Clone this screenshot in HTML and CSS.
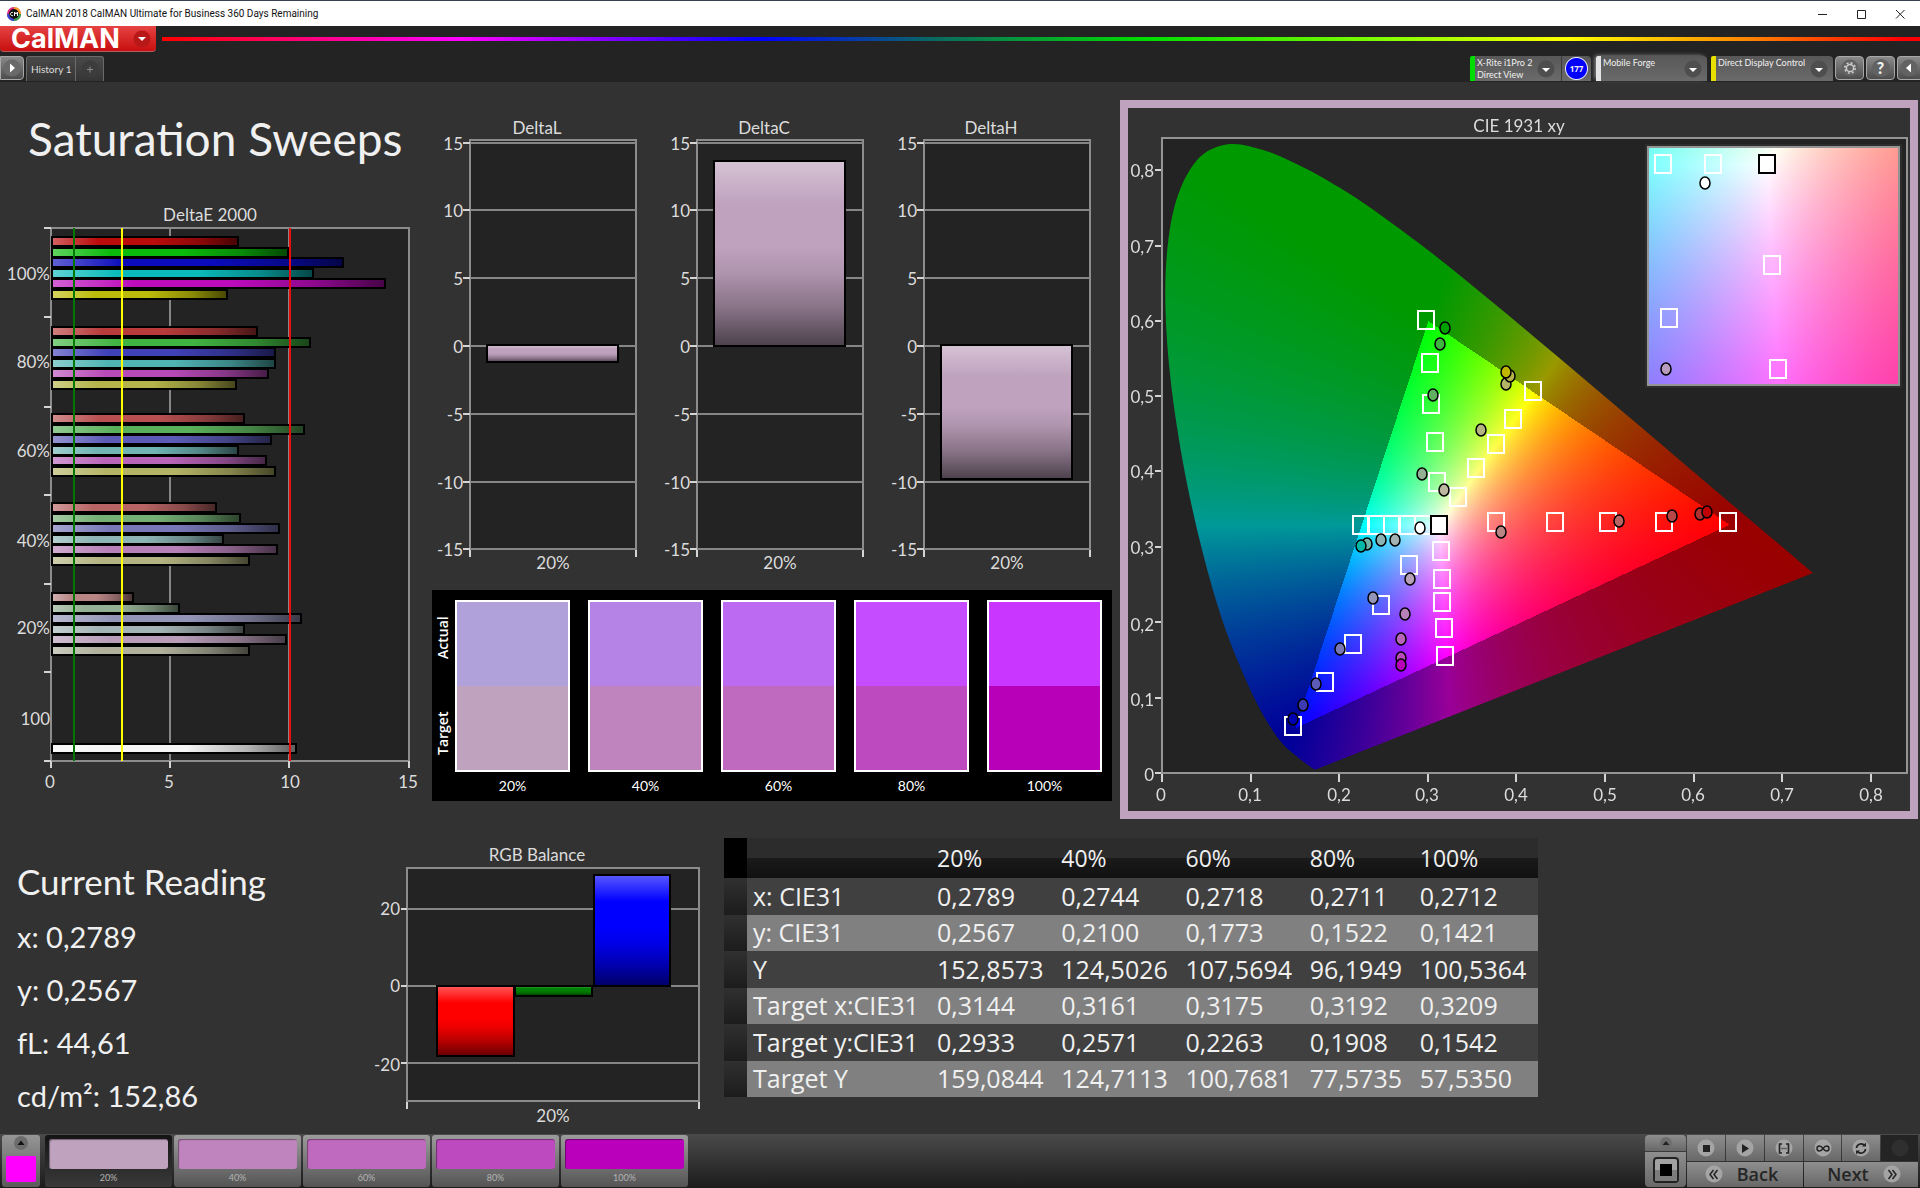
FILE: index.html
```html
<!DOCTYPE html>
<html lang="en">
<head>
<meta charset="utf-8">
<title>CalMAN 2018 CalMAN Ultimate for Business</title>
<link rel="stylesheet" href="styles.css">
</head>
<body>
<header class="titlebar">
  <svg class="app-icon" viewBox="0 0 14 14" aria-hidden="true">
    <circle cx="7" cy="7" r="6" fill="#111" stroke="#e0267e" stroke-width="2"/>
    <path d="M7 1a6 6 0 0 1 6 6" fill="none" stroke="#f5a21c" stroke-width="2"/>
    <path d="M13 7a6 6 0 0 1-6 6" fill="none" stroke="#2aa84a" stroke-width="2"/>
    <path d="M7 13a6 6 0 0 1-6-6" fill="none" stroke="#2a49d8" stroke-width="2"/>
    <path d="M6 5.500a1.700 1.700 0 1 0 0 3M7.500 9V5l1.500 2 1.500-2v4" fill="none" stroke="#fff" stroke-width="1"/>
  </svg>
  <span class="titlebar-text">CalMAN 2018 CalMAN Ultimate for Business 360 Days Remaining</span>
  <div class="window-controls">
    <button type="button" aria-label="Minimize"><svg viewBox="0 0 10 10"><path d="M1 5.500h9" /></svg></button>
    <button type="button" aria-label="Maximize"><svg viewBox="0 0 10 10"><path d="M1.500 1.500h8v8h-8z"/></svg></button>
    <button type="button" aria-label="Close"><svg viewBox="0 0 10 10"><path d="M1 1l8.500 8.500M9.500 1L1 9.500"/></svg></button>
  </div>
</header>

<div class="brandbar">
  <button type="button" class="brand">CalMAN
    <svg class="knob" viewBox="0 0 18 18"><circle cx="9" cy="9" r="8.500" fill="#b81818"/><path d="M5 7h8l-4 4z" fill="#fff"/></svg>
  </button>
  <div class="spectrum"></div>
</div>

<nav class="toolbar">
  <button type="button" class="square-button side-left" aria-label="Expand"><svg class="knob" viewBox="0 0 18 18"><circle cx="9" cy="9" r="8.500" fill="#6a6a6a"/><path d="M7 4.500v9l5-4.500z" fill="#fff"/></svg></button>
  <div class="tabs">
    <button type="button" class="tab">History 1</button>
    <button type="button" class="tab tab-add" aria-label="Add history"><svg class="knob" viewBox="0 0 18 18"><circle cx="9" cy="9" r="8.500" fill="#3c3c3c"/><path d="M6 9.500h6M9 6.500v6" stroke="#8a8a8a"/></svg></button>
  </div>
  <div class="devices">
    <div class="device meter">
      <button type="button" class="device-name" aria-haspopup="listbox">X-Rite i1Pro 2<br>Direct View</button>
      <svg class="knob device-knob" viewBox="0 0 18 18"><circle cx="9" cy="9" r="8.500" fill="#4e4e4e"/><path d="M5 8h8l-4 4z" fill="#fff"/></svg>
      <span class="badge">177</span>
    </div>
    <label class="device source">
      <select class="device-name" aria-label="Source"><option>Mobile Forge</option></select>
      <svg class="knob device-knob" viewBox="0 0 18 18"><circle cx="9" cy="9" r="8.500" fill="#4e4e4e"/><path d="M5 8h8l-4 4z" fill="#fff"/></svg>
    </label>
    <label class="device display">
      <select class="device-name" aria-label="Display"><option>Direct Display Control</option></select>
      <svg class="knob device-knob" viewBox="0 0 18 18"><circle cx="9" cy="9" r="8.500" fill="#4e4e4e"/><path d="M5 8h8l-4 4z" fill="#fff"/></svg>
    </label>
    <button type="button" class="square-button" aria-label="Settings"><svg class="knob" viewBox="0 0 18 18"><circle cx="9" cy="9" r="8.500" fill="#626262"/><circle cx="9" cy="9" r="3.600" fill="none" stroke="#ccc" stroke-width="1.500"/><circle cx="9" cy="9" r="5.200" fill="none" stroke="#ccc" stroke-width="1.600" stroke-dasharray="2 2.080"/></svg></button>
    <button type="button" class="square-button help" aria-label="Help"><span>?</span></button>
    <button type="button" class="square-button side-right" aria-label="Collapse"><svg class="knob" viewBox="0 0 18 18"><circle cx="9" cy="9" r="8.500" fill="#626262"/><path d="M11 4.500v9L6 9z" fill="#fff"/></svg></button>
  </div>
</nav>

<main>
  <svg class="defs" width="0" height="0" aria-hidden="true">
    <defs>
      <linearGradient id="sheen-x" x1="0" x2="1" y1="0" y2="0">
        <stop offset="0" stop-color="#fff" stop-opacity=".35"/><stop offset=".25" stop-color="#fff" stop-opacity="0"/>
        <stop offset=".55" stop-color="#000" stop-opacity="0"/><stop offset=".8" stop-color="#000" stop-opacity=".26"/><stop offset="1" stop-color="#000" stop-opacity=".62"/>
      </linearGradient>
      <linearGradient id="sheen-y" x1="0" x2="0" y1="0" y2="1">
        <stop offset="0" stop-color="#fff" stop-opacity=".35"/><stop offset=".24" stop-color="#fff" stop-opacity="0"/>
        <stop offset=".46" stop-color="#000" stop-opacity="0"/><stop offset=".6" stop-color="#000" stop-opacity=".08"/>
        <stop offset=".8" stop-color="#000" stop-opacity=".3"/><stop offset="1" stop-color="#000" stop-opacity=".6"/>
      </linearGradient>
      <rect id="target" x="-8" y="-9" width="16" height="18" fill="none" stroke="#fff" stroke-width="2"/>
      <rect id="white-target" x="-8" y="-9" width="16" height="18" fill="#fff" stroke="#000" stroke-width="2"/>
      <ellipse id="reading" rx="5" ry="6" stroke="#000" stroke-width="1.500"/>
    </defs>
  </svg>

  <section class="upper">
    <div class="sweeps">
      <h1>Saturation Sweeps</h1>
      <svg class="chart" viewBox="0 0 424 600" role="img" aria-label="DeltaE 2000">
        <text class="mid" x="210" y="21">DeltaE 2000</text>
        <rect class="plot" x="51" y="28" width="358" height="533"/>
        <path class="grid" d="M170 28v533M289 28v533"/>
        <path class="tick" d="M44 28h7M44 117h7M44 207h7M44 295h7M44 384h7M44 472h7M44 561h7M51 561v7M170 561v7M289 561v7M409 561v7"/>
        <g id="deltae-bars"></g>
        <path d="M74 28v533" stroke="#007800" stroke-width="2"/>
        <path d="M122 28v533" stroke="#ff0" stroke-width="2"/>
        <path d="M290 28v533" stroke="#e80c0c" stroke-width="2"/>
        <g class="end"><text x="50" y="80">100%</text><text x="50" y="168">80%</text><text x="50" y="257">60%</text><text x="50" y="347">40%</text><text x="50" y="434">20%</text><text x="50" y="525">100</text></g>
        <g class="mid"><text x="50" y="588">0</text><text x="169" y="588">5</text><text x="290" y="588">10</text><text x="408" y="588">15</text></g>
      </svg>
    </div>

    <div class="deltas">
      <div class="delta-charts">
        <svg class="chart" viewBox="0 0 227 480" role="img" aria-label="DeltaL" data-title="DeltaL" data-top="245" data-height="17"></svg>
        <svg class="chart" viewBox="0 0 227 480" role="img" aria-label="DeltaC" data-title="DeltaC" data-top="61" data-height="185"></svg>
        <svg class="chart" viewBox="0 0 227 480" role="img" aria-label="DeltaH" data-title="DeltaH" data-top="245" data-height="134"></svg>
      </div>
      <div class="swatches">
        <div class="swatch-sides"><span>Actual</span><span>Target</span></div>
        <div class="swatch s20"><i></i><b></b><span>20%</span></div>
        <div class="swatch s40"><i></i><b></b><span>40%</span></div>
        <div class="swatch s60"><i></i><b></b><span>60%</span></div>
        <div class="swatch s80"><i></i><b></b><span>80%</span></div>
        <div class="swatch s100"><i></i><b></b><span>100%</span></div>
      </div>
    </div>

    <div class="cie">
      <canvas id="gamut" width="782" height="703"></canvas>
      <svg class="chart" viewBox="0 0 782 703" role="img" aria-label="CIE 1931 xy">
        <text class="mid" x="391" y="24">CIE 1931 xy</text>
        <path class="frame" d="M34 30h745v635h-745z"/>
        <path class="frame" d="M520 39h251v238h-251z"/>
        <path class="tick" d="M27 62h6M27 138h6M27 213h6M27 288h6M27 363h6M27 439h6M27 514h6M27 590h6M27 665h6M34 666v8M123 666v8M211 666v8M300 666v8M388 666v8M477 666v8M566 666v8M654 666v8M743 666v8"/>
        <g class="end"><text x="26" y="69">0,8</text><text x="26" y="145">0,7</text><text x="26" y="220">0,6</text><text x="26" y="295">0,5</text><text x="26" y="370">0,4</text><text x="26" y="446">0,3</text><text x="26" y="523">0,2</text><text x="26" y="598">0,1</text><text x="26" y="673">0</text></g>
        <g class="mid"><text x="33" y="693">0</text><text x="122" y="693">0,1</text><text x="211" y="693">0,2</text><text x="299" y="693">0,3</text><text x="388" y="693">0,4</text><text x="477" y="693">0,5</text><text x="565" y="693">0,6</text><text x="654" y="693">0,7</text><text x="743" y="693">0,8</text></g>
        <g>
          <use href="#target" x="298" y="212"/><use href="#target" x="302" y="255"/><use href="#target" x="303" y="296"/><use href="#target" x="307" y="334"/><use href="#target" x="309" y="374"/>
          <use href="#target" x="405" y="283"/><use href="#target" x="385" y="311"/><use href="#target" x="368" y="336"/><use href="#target" x="348" y="360"/><use href="#target" x="330" y="389"/>
          <use href="#target" x="233" y="417"/><use href="#target" x="248" y="417"/><use href="#target" x="264" y="417"/><use href="#target" x="279" y="417"/><use href="#target" x="295" y="417"/>
          <use href="#target" x="368" y="414"/><use href="#target" x="427" y="414"/><use href="#target" x="480" y="414"/><use href="#target" x="536" y="414"/><use href="#target" x="600" y="414"/>
          <use href="#target" x="313" y="443"/><use href="#target" x="314" y="471"/><use href="#target" x="314" y="494"/><use href="#target" x="316" y="520"/><use href="#target" x="317" y="548"/>
          <use href="#target" x="281" y="457"/><use href="#target" x="253" y="497"/><use href="#target" x="225" y="536"/><use href="#target" x="197" y="574"/><use href="#target" x="165" y="618"/>
          <use href="#white-target" x="311" y="417"/>
        </g>
        <g>
          <use href="#reading" x="317" y="220" fill="#00a000"/><use href="#reading" x="312" y="236" fill="#40b440"/><use href="#reading" x="305" y="287" fill="#60b060"/><use href="#reading" x="294" y="366" fill="#94b094"/>
          <use href="#reading" x="353" y="322" fill="#b4b482"/><use href="#reading" x="378" y="276" fill="#b4b466"/><use href="#reading" x="382" y="268" fill="#b4b44a"/><use href="#reading" x="378" y="264" fill="#c0b800"/><use href="#reading" x="316" y="382" fill="#bcb8a0"/>
          <use href="#reading" x="292" y="420" fill="#fff"/>
          <use href="#reading" x="239" y="436" fill="#70b4a8"/><use href="#reading" x="233" y="438" fill="#00b8a8"/><use href="#reading" x="253" y="432" fill="#8cb4b4"/><use href="#reading" x="267" y="432" fill="#a4b4b4"/>
          <use href="#reading" x="373" y="424" fill="#b88484"/><use href="#reading" x="491" y="413" fill="#b86464"/><use href="#reading" x="544" y="408" fill="#b84848"/><use href="#reading" x="572" y="406" fill="#b03030"/><use href="#reading" x="579" y="404" fill="#c00000"/>
          <use href="#reading" x="282" y="471" fill="#b8a0b8"/><use href="#reading" x="277" y="506" fill="#b880b8"/><use href="#reading" x="273" y="531" fill="#b864b8"/><use href="#reading" x="273" y="550" fill="#b84ab8"/><use href="#reading" x="273" y="557" fill="#b800b8"/>
          <use href="#reading" x="245" y="490" fill="#9494b8"/><use href="#reading" x="212" y="541" fill="#7878b8"/><use href="#reading" x="188" y="576" fill="#5c5cb8"/><use href="#reading" x="175" y="597" fill="#3c3cb0"/><use href="#reading" x="165" y="611" fill="#0000b0"/>
        </g>
        <g>
          <use href="#target" x="535" y="56"/><use href="#target" x="585" y="56"/><use href="#white-target" x="639" y="56"/><use href="#target" x="644" y="157"/><use href="#target" x="541" y="210"/><use href="#target" x="650" y="261"/>
          <use href="#reading" x="577" y="75" fill="#fff"/><use href="#reading" x="538" y="261" fill="#b89cc0"/>
        </g>
      </svg>
    </div>
  </section>

  <section class="lower">
    <div class="reading">
      <h2>Current Reading</h2>
      <p>x: 0,2789</p>
      <p>y: 0,2567</p>
      <p>fL: 44,61</p>
      <p>cd/m²: 152,86</p>
    </div>
    <svg class="chart" viewBox="0 0 338 292" role="img" aria-label="RGB Balance">
      <text class="mid" x="169" y="23">RGB Balance</text>
      <rect class="plot" x="39" y="30" width="292" height="233"/>
      <path class="grid" d="M39 71h292M39 148h292M39 225h292"/>
      <path class="tick" d="M33 71h6M33 148h6M33 225h6M39 264v7M331 264v7"/>
      <g class="bar"><rect x="69" y="148" width="77" height="70" fill="#f00"/><rect x="69" y="148" width="77" height="70" fill="url(#sheen-y)"/></g>
      <g class="bar"><rect x="147" y="148" width="77" height="10" fill="#008000"/><rect x="147" y="148" width="77" height="10" fill="url(#sheen-y)"/></g>
      <g class="bar"><rect x="226" y="37" width="76" height="111" fill="#00f"/><rect x="226" y="37" width="76" height="111" fill="url(#sheen-y)"/></g>
      <g class="end"><text x="32" y="77">20</text><text x="32" y="154">0</text><text x="32" y="233">-20</text></g>
      <text class="mid" x="185" y="284">20%</text>
    </svg>
    <div class="table-wrap">
      <table>
        <thead><tr><th class="handle"></th><th class="name"></th><th scope="col">20%</th><th scope="col">40%</th><th scope="col">60%</th><th scope="col">80%</th><th scope="col">100%</th></tr></thead>
        <tbody>
          <tr><td class="handle"></td><th scope="row">x: CIE31</th><td>0,2789</td><td>0,2744</td><td>0,2718</td><td>0,2711</td><td>0,2712</td></tr>
          <tr><td class="handle"></td><th scope="row">y: CIE31</th><td>0,2567</td><td>0,2100</td><td>0,1773</td><td>0,1522</td><td>0,1421</td></tr>
          <tr><td class="handle"></td><th scope="row">Y</th><td>152,8573</td><td>124,5026</td><td>107,5694</td><td>96,1949</td><td>100,5364</td></tr>
          <tr><td class="handle"></td><th scope="row">Target x:CIE31</th><td>0,3144</td><td>0,3161</td><td>0,3175</td><td>0,3192</td><td>0,3209</td></tr>
          <tr><td class="handle"></td><th scope="row">Target y:CIE31</th><td>0,2933</td><td>0,2571</td><td>0,2263</td><td>0,1908</td><td>0,1542</td></tr>
          <tr><td class="handle"></td><th scope="row">Target Y</th><td>159,0844</td><td>124,7113</td><td>100,7681</td><td>77,5735</td><td>57,5350</td></tr>
        </tbody>
      </table>
    </div>
  </section>
</main>

<footer class="dock">
  <button type="button" class="current-color" aria-label="Current color">
    <svg viewBox="0 0 14 14"><circle cx="7" cy="7" r="7" fill="#6c6c6c"/><path d="M3.500 9h7L7 4.500z" fill="#111"/></svg>
    <span class="chip"></span>
  </button>
  <div class="steps">
    <button type="button" class="step t20 selected"><span class="chip"></span>20%</button>
    <button type="button" class="step t40"><span class="chip"></span>40%</button>
    <button type="button" class="step t60"><span class="chip"></span>60%</button>
    <button type="button" class="step t80"><span class="chip"></span>80%</button>
    <button type="button" class="step t100"><span class="chip"></span>100%</button>
  </div>
  <div class="transport">
    <div class="pattern">
      <button type="button" class="key pattern-up" aria-label="Show pattern menu"><svg viewBox="0 0 18 14"><circle cx="9" cy="7" r="6" fill="#6e6e6e"/><path d="M5.500 9h7L9 5z" fill="#222"/></svg></button>
      <button type="button" class="key pattern-box" aria-label="Pattern"><svg viewBox="0 0 28 28"><rect x="2" y="2" width="24" height="24" rx="3" fill="#a2a2a2" stroke="#222" stroke-width="2"/><rect x="3" y="14" width="22" height="11" fill="#7c7c7c"/><path d="M8 8h12v12H8z" fill="#000"/></svg></button>
    </div>
    <div class="keys">
      <button type="button" class="key" aria-label="Stop"><svg viewBox="0 0 18 18"><circle cx="9" cy="9" r="8.500"/><path d="M6 6h7v7H6z" fill="#222"/></svg></button>
      <button type="button" class="key" aria-label="Play"><svg viewBox="0 0 18 18"><circle cx="9" cy="9" r="8.500"/><path d="M6 5v9l7-4.500z" fill="#222"/></svg></button>
      <button type="button" class="key" aria-label="Read series"><svg viewBox="0 0 18 18"><circle cx="9" cy="9" r="8.500"/><path d="M7 5H4.500v9H7M11 5h2.500v9H11M6.500 9.500h1M8.500 9.500h1M10.500 9.500h1" fill="none" stroke="#222" stroke-width="1.600"/></svg></button>
      <button type="button" class="key" aria-label="Read continuously"><svg viewBox="0 0 18 18"><circle cx="9" cy="9" r="8.500"/><path d="M9 9.500C7.500 7.500 6.500 7 5.500 7a2.500 2.500 0 0 0 0 5c1 0 2-.5 3.500-2.500S11.500 7 12.500 7a2.500 2.500 0 0 1 0 5c-1 0-2-.5-3.500-2.500z" fill="none" stroke="#222" stroke-width="1.400"/></svg></button>
      <button type="button" class="key" aria-label="Refresh"><svg viewBox="0 0 18 18"><circle cx="9" cy="9" r="8.500"/><path d="M4.500 9a4.500 4.500 0 0 1 7.500-3M13.500 10a4.500 4.500 0 0 1-7.500 3" fill="none" stroke="#222" stroke-width="1.700"/><path d="M10 7.500h4v-4zM8 11.500H4v4z" fill="#222"/></svg></button>
      <button type="button" class="key off" aria-label="Unavailable" disabled><svg viewBox="0 0 18 18"><circle cx="9" cy="9" r="8.500"/></svg></button>
      <button type="button" class="key wide"><svg viewBox="0 0 18 18"><circle cx="9" cy="9" r="8.500"/><path d="M8.500 5L5 9.500 8.500 14M12.500 5L9 9.500l3.500 4.500" fill="none" stroke="#222" stroke-width="1.500"/></svg>Back</button>
      <button type="button" class="key wide next">Next<svg viewBox="0 0 18 18"><circle cx="9" cy="9" r="8.500"/><path d="M5.500 5L9 9.500 5.500 14M9.500 5l3.500 4.500L9.500 14" fill="none" stroke="#222" stroke-width="1.500"/></svg></button>
    </div>
  </div>
</footer>
<script src="charts.js"></script>
</body>
</html>
```
FILE: styles.css
```css
* { box-sizing: border-box; }

body {
  margin: 0;
  min-height: 100vh;
  display: flex;
  flex-direction: column;
  background: #323232;
  color: #f0f0f0;
  font-family: Lato, "Open Sans", sans-serif;
}

button, select {
  font: inherit;
  color: inherit;
  border: 0;
  padding: 0;
  margin: 0;
  background: none;
}

svg { display: block; }
.defs { position: absolute; }
.knob { width: 18px; height: 18px; flex: none; }

/* Window title */
.titlebar {
  display: flex;
  align-items: center;
  height: 26px;
  padding-left: 7px;
  background: #fff;
  border-top: 1px solid #3a4052;
  color: #111;
  font-family: Roboto, sans-serif;
  font-size: 10px;
}
.app-icon { width: 14px; height: 14px; margin-right: 5px; }
.window-controls { margin: 0 1px 0 auto; display: flex; }
.window-controls button { width: 39px; height: 24px; display: grid; place-items: center; }
.window-controls svg { width: 10px; height: 10px; fill: none; stroke: #222; }

/* Brand and spectrum */
.brandbar {
  display: flex;
  align-items: center;
  gap: 6px;
  height: 28px;
  background: #232323;
}
.brand {
  width: 156px;
  height: 26px;
  margin-bottom: 2px;
  padding: 0 5px 0 11px;
  display: flex;
  align-items: center;
  justify-content: space-between;
  border-radius: 0 0 4px 4px;
  border-bottom: 1px solid #b06060;
  background: linear-gradient(#e64343, #c80f0f);
  color: #fff;
  font-family: Inter, sans-serif;
  font-size: 27px;
  font-weight: 700;
  line-height: 24px;
}
.spectrum {
  flex: 1;
  height: 4px;
  margin-bottom: 2px;
  background: linear-gradient(90deg, #f00, #f0f 17%, #00f 34%, #0a6a60 44%, #0d0 56%, #8f0 70%, #ff0 80%, #f80 90%, #f00 99%);
}

/* Toolbar */
.toolbar {
  display: flex;
  align-items: flex-end;
  height: 28px;
  padding-bottom: 1px;
  background: #232323;
  font-size: 10px;
}
.square-button {
  width: 29px;
  height: 24px;
  margin-bottom: 1px;
  display: grid;
  place-items: center;
  border: 1px solid #a8a8a8;
  border-radius: 4px;
  background: linear-gradient(#8a8a8a, #4c4c4c);
}
.side-left { width: 24px; border-radius: 0 4px 4px 0; }
.side-right { width: 23px; border-radius: 4px 0 0 4px; border-right: 0; }
.help span {
  width: 18px;
  border-radius: 9px;
  background: #626262;
  font-size: 16px;
  font-weight: 900;
  line-height: 18px;
}
.tabs { display: flex; margin-left: 2px; }
.tab {
  height: 25px;
  padding: 0 4px;
  display: grid;
  place-items: center;
  border: 1px solid #6a6a6a;
  border-bottom: 0;
  border-radius: 3px 0 0 0;
  background: linear-gradient(#4a4a4a, #353535);
  color: #ddd;
}
.tab-add { border-left: 0; border-radius: 0 3px 0 0; width: 28px; }
.devices { display: flex; align-items: flex-end; gap: 2px; margin-left: auto; }
.device {
  height: 25px;
  display: flex;
  border-left: 5px solid #0d0;
  border-radius: 2px 4px 0 0;
  background: linear-gradient(#585858, #6a6a6a);
  font-size: 9px;
  line-height: 12px;
  white-space: nowrap;
}
.device-name { flex: 1; min-width: 0; padding: 1px 0 0 2px; text-align: left; appearance: none; }
select.device-name { padding: 1px 0 12px 2px; }
.device-knob { margin: 4px 5px 0 0; }
.meter { width: 121px; margin-right: 3px; }
.meter .device-knob { margin-right: 6px; }
.source { width: 111px; margin-right: 2px; border-color: #e4e4e4; box-shadow: -2px -1px 4px -1px #999; }
.display { width: 122px; border-color: #e8e000; }
.badge {
  width: 30px;
  border-left: 1px solid #3a3a3a;
  display: grid;
  place-items: center;
  background: radial-gradient(circle, #00f 10px, #e8e8ff 11px, transparent 12px);
  font-family: "Open Sans", sans-serif;
  font-size: 8px;
  font-weight: 700;
}

/* Workspace */
main { flex: 1; padding-top: 18px; }
.chart { width: 100%; height: auto; font-size: 17px; }
.chart text { fill: #dcdcdc; }
.chart .mid { text-anchor: middle; }
.chart .end { text-anchor: end; }
.plot { fill: #232323; stroke: #8c8c8c; stroke-width: 2; }
.frame { fill: none; stroke: #949494; stroke-width: 2; }
.grid { fill: none; stroke: #868686; stroke-width: 2; }
.tick { fill: none; stroke: #d4d4d4; stroke-width: 2; }
.bar { stroke: #000; stroke-width: 2; }

.upper {
  display: grid;
  grid-template-columns: minmax(0, 424fr) minmax(0, 696fr) minmax(0, 800fr);
  align-items: start;
}
h1 {
  margin: 0 0 22px 28px;
  font-size: 46px;
  font-weight: 400;
  line-height: 78px;
  white-space: nowrap;
}
.delta-charts {
  display: grid;
  grid-template-columns: repeat(3, minmax(0, 1fr));
  padding-right: 15px;
}

.swatches {
  display: grid;
  grid-template-columns: 5px repeat(5, minmax(0, 1fr));
  column-gap: 18px;
  margin: 10px 8px 0;
  padding: 10px 10px 9px 0;
  background: #000;
  color: #fff;
  font-size: 14px;
}
.swatch-sides {
  display: grid;
  grid-template-rows: 76px 78px;
  align-content: start;
  row-gap: 18px;
  width: 22px;
  font-family: "Open Sans", sans-serif;
  font-weight: 600;
}
.swatch-sides span {
  writing-mode: vertical-rl;
  transform: rotate(180deg);
  text-align: center;
  line-height: 22px;
}
.swatch { display: grid; grid-template-rows: 86px 86px 20px; text-align: center; }
.swatch i { border: 2px solid #fff; border-bottom: 0; }
.swatch b { border: 2px solid #fff; border-top: 0; }
.swatch span { line-height: 28px; }
.s20 i { background: #b0a1da; } .s20 b { background: #bfa2be; }
.s40 i { background: #b582e6; } .s40 b { background: #bf84be; }
.s60 i { background: #bd6af2; } .s60 b { background: #bf6abe; }
.s80 i { background: #c64dff; } .s80 b { background: #bd4abe; }
.s100 i { background: #c936ff; } .s100 b { background: #b700b7; }

.cie {
  display: grid;
  margin-right: 2px;
  border: 8px solid #bfa2be;
}
.cie > * { grid-area: 1 / 1; width: 100%; height: auto; }

.lower {
  display: grid;
  grid-template-columns: minmax(0, 368fr) minmax(0, 338fr) minmax(0, 1214fr);
  align-items: start;
  margin-top: 19px;
}
.reading { padding: 15px 0 0 17px; }
.reading h2, .reading p {
  margin: 0;
  font-size: 29px;
  font-weight: 400;
  line-height: 53px;
}
.reading h2 { font-size: 35px; line-height: 57px; }

.table-wrap { padding-left: 18px; }
table {
  width: 100%;
  max-width: 814px;
  table-layout: fixed;
  border-collapse: collapse;
  font-family: "Open Sans", sans-serif;
  font-size: 25px;
  line-height: 30px;
}
th, td { padding: 0 0 2px 6px; text-align: left; font-weight: 400; white-space: nowrap; }
thead th { height: 40px; padding-bottom: 0; font-size: 23px; background: linear-gradient(#2c2c2c 50%, #1a1a1a 50%, #111); }
thead .handle { width: 23px; background: #000; }
thead .name { width: 184px; }
th:nth-child(6) { width: 110px; }
tbody tr { height: 36px; background: #808080; }
tbody tr:nth-child(odd) { height: 37px; background: #404040; }
tbody .handle { background: linear-gradient(#303030, #1c1c1c); }

/* Bottom dock */
.dock {
  display: flex;
  align-items: stretch;
  height: 54px;
  padding: 1px 2px;
  background: linear-gradient(#4a4a4a, #1c1c1c);
}
.current-color {
  width: 38px;
  display: flex;
  flex-direction: column;
  align-items: center;
  justify-content: space-between;
  padding: 1px 4px 5px;
  border-radius: 3px;
  background: linear-gradient(#969696, #5a5a5a);
}
.current-color svg { width: 14px; height: 14px; }
.current-color .chip { width: 30px; height: 26px; border-radius: 2px; background: #f0f; }
.steps { display: flex; gap: 2px; margin-left: 5px; }
.step {
  width: 127px;
  padding: 4px 4px 0;
  border-radius: 3px;
  background: linear-gradient(#9c9c9c, #545454);
  color: #b4b4b4;
  font-size: 9px;
  line-height: 18px;
}
.step .chip { display: block; height: 30px; border-radius: 3px; box-shadow: inset 1px 1px 1px #0006; }
.selected { background: linear-gradient(#141414, #3a3a3a); }
.t20 .chip { background: #bfa2be; }
.t40 .chip { background: #bf84be; }
.t60 .chip { background: #bf6abe; }
.t80 .chip { background: #bd4abe; }
.t100 .chip { background: #ba00ba; }

.transport { display: flex; gap: 1px; margin-left: auto; }
.pattern { width: 41px; display: grid; grid-template-rows: 16px 1fr; gap: 1px; }
.keys {
  display: grid;
  grid-template-columns: 38px 38px 38px 37px 38px 37px;
  grid-template-rows: 1fr 1fr;
  gap: 1px;
}
.key {
  display: flex;
  align-items: center;
  justify-content: center;
  background: linear-gradient(#8e8e8e, #686868);
}
.keys .key svg { width: 18px; height: 18px; fill: #a4a4a4; }
.key.off { background: #242424; }
.keys .off svg { fill: #2f2f2f; }
.pattern-up { border-radius: 4px 4px 0 0; }
.pattern-up svg { width: 18px; height: 14px; }
.pattern-box { border-radius: 0 0 4px 4px; }
.pattern-box svg { width: 28px; height: 28px; }
.key.wide {
  grid-column: span 3;
  gap: 14px;
  padding-right: 7px;
  color: #262626;
  font-family: "Open Sans", sans-serif;
  font-size: 18px;
  font-weight: 600;
  line-height: 24px;
}
.key.next { padding: 0 0 0 6px; }
```
FILE: charts.js
```js
const SVG = 'http://www.w3.org/2000/svg';

function add(parent, name, attrs, text) {
  const el = document.createElementNS(SVG, name);
  for (const key in attrs) el.setAttribute(key, attrs[key]);
  if (text !== undefined) el.textContent = text;
  parent.appendChild(el);
  return el;
}

function bar(parent, x, y, width, height, color, sheen) {
  const g = add(parent, 'g', { class: 'bar' });
  add(g, 'rect', { x, y, width, height, fill: color });
  add(g, 'rect', { x, y, width, height, fill: `url(#${sheen})` });
}

// DeltaE 2000: one group per saturation, each row is [bar end, colour]
const groups = [
  [37, [[239, '#bb0b0b'], [289, '#0bbb0b'], [344, '#0b0bbb'], [314, '#0bbbbb'], [386, '#bb0bbb'], [228, '#bbbb0b']]],
  [127, [[258, '#b83a3a'], [311, '#40b440'], [276, '#4040b8'], [276, '#50b4b4'], [269, '#b84ab8'], [237, '#b4b44a']]],
  [214, [[245, '#b85050'], [305, '#5ab05a'], [272, '#5c5cb8'], [239, '#70b4b4'], [267, '#b864b8'], [276, '#b4b466']]],
  [303, [[217, '#b86464'], [241, '#74b074'], [280, '#7878b8'], [224, '#8cb4b4'], [278, '#b880b8'], [250, '#b4b482']]],
  [393, [[134, '#b88484'], [180, '#94b094'], [302, '#9494b8'], [245, '#a4b4b4'], [287, '#b89cb8'], [250, '#b0b09c']]],
  [544, [[297, '#f4f4f4']]]
];
const deltaE = document.getElementById('deltae-bars');
for (const [top, rows] of groups) {
  rows.forEach(([end, color], i) => {
    bar(deltaE, 52, top + Math.round(i * 10.6), end - 53, 9, color, 'sheen-x');
  });
}

// DeltaL, DeltaC and DeltaH share one set of axes
const levels = [[15, 43], [10, 110], [5, 178], [0, 246], [-5, 314], [-10, 382], [-15, 449]];
for (const svg of document.querySelectorAll('svg[data-title]')) {
  add(svg, 'text', { class: 'mid', x: 113, y: 34 }, svg.dataset.title);
  add(svg, 'rect', { class: 'plot', x: 46, y: 40, width: 166, height: 409 });
  for (const [value, y] of levels) {
    add(svg, 'path', { class: 'grid', d: `M46 ${y}h166` });
    add(svg, 'path', { class: 'tick', d: `M39 ${y}h7` });
    add(svg, 'text', { class: 'end', x: 39, y: y + 7 }, value);
  }
  add(svg, 'path', { class: 'tick', d: 'M46 450v7M212 450v7' });
  add(svg, 'text', { class: 'mid', x: 129, y: 469 }, '20%');
  bar(svg, 63, +svg.dataset.top, 131, +svg.dataset.height, '#bfa2be', 'sheen-y');
}

// CIE 1931 chromaticity diagram
const locus = [
  [.1741, .005], [.1714, .0051], [.1644, .0109], [.1566, .0177], [.144, .0297], [.1355, .0399], [.1241, .0578],
  [.1096, .0868], [.0913, .1327], [.0687, .2007], [.0454, .295], [.0235, .4127], [.0082, .5384], [.0039, .6548],
  [.0139, .7502], [.0389, .812], [.0743, .8338], [.1142, .8262], [.1547, .8059], [.1929, .7816], [.2296, .7543],
  [.3016, .6923], [.3731, .6245], [.4441, .5547], [.5125, .4866], [.5752, .4242], [.627, .3725], [.6658, .334],
  [.6915, .3083], [.719, .2809], [.7347, .2653]
];
const canvas = document.getElementById('gamut');
const ctx = canvas.getContext('2d');

function chromaColor(x, y) {
  const X = x / y, Z = (1 - x - y) / y;
  const rgb = [
    3.2406 * X - 1.5372 - .4986 * Z,
    -.9689 * X + 1.8758 + .0415 * Z,
    .0557 * X - .204 + 1.057 * Z
  ];
  const inside = Math.min(...rgb) >= 0;
  const scale = (inside ? 255 : 153) / Math.max(...rgb);
  return rgb.map(v => Math.max(0, v) * scale);
}

function colorField(width, height, toXY) {
  const layer = document.createElement('canvas');
  layer.width = width;
  layer.height = height;
  const layerCtx = layer.getContext('2d');
  const image = layerCtx.createImageData(width, height);
  for (let py = 0; py < height; py++) {
    for (let px = 0; px < width; px++) {
      const [x, y] = toXY(px, py);
      const i = (py * width + px) * 4;
      const [r, g, b] = chromaColor(x, Math.max(y, .001));
      image.data[i] = r;
      image.data[i + 1] = g;
      image.data[i + 2] = b;
      image.data[i + 3] = 255;
    }
  }
  layerCtx.putImageData(image, 0, 0);
  return layer;
}

ctx.fillStyle = '#232323';
ctx.fillRect(34, 30, 745, 635);

const points = locus.map(([x, y]) => [34 + x * 886, 665 - y * 754]);
ctx.save();
ctx.beginPath();
ctx.moveTo(...points[0]);
for (let i = 0; i < points.length - 1; i++) {
  const a = points[Math.max(i - 1, 0)], b = points[i], c = points[i + 1];
  const d = points[Math.min(i + 2, points.length - 1)];
  ctx.bezierCurveTo(
    b[0] + (c[0] - a[0]) / 6, b[1] + (c[1] - a[1]) / 6,
    c[0] - (d[0] - b[0]) / 6, c[1] - (d[1] - b[1]) / 6,
    c[0], c[1]
  );
}
ctx.closePath();
ctx.clip();
ctx.drawImage(colorField(782, 703, (px, py) => [(px - 34) / 886, (665 - py) / 754]), 0, 0);
ctx.restore();

ctx.fillStyle = '#2d2d2d';
ctx.fillRect(517, 36, 257, 244);
ctx.drawImage(colorField(251, 238, (px, py) => [.3127 + (px - 119) / 3000, .329 - (py - 17) / 2855]), 520, 39);
```
